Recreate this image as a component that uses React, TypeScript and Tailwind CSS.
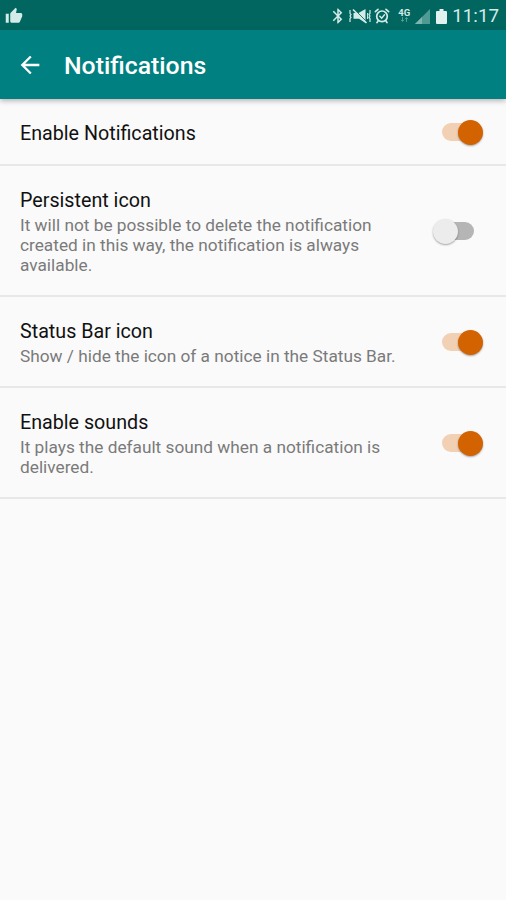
import { useState } from "react";
import { MdArrowBack, MdBluetooth, MdThumbUp } from "react-icons/md";

interface Setting {
  id: string;
  title: string;
  summary?: string;
  enabled: boolean;
  rowClass: string;
}

const SETTINGS: Setting[] = [
  { id: "all", title: "Enable Notifications", enabled: true, rowClass: "h-[67px]" },
  {
    id: "persistent",
    title: "Persistent icon",
    summary:
      "It will not be possible to delete the notification created in this way, the notification is always available.",
    enabled: false,
    rowClass: "h-[131px]",
  },
  {
    id: "statusbar",
    title: "Status Bar icon",
    summary: "Show / hide the icon of a notice in the Status Bar.",
    enabled: true,
    rowClass: "h-[91px]",
  },
  {
    id: "sounds",
    title: "Enable sounds",
    summary: "It plays the default sound when a notification is delivered.",
    enabled: true,
    rowClass: "h-[111px]",
  },
];

function MutedIcon() {
  return (
    <svg className="h-4 w-[22px]" viewBox="0 0 22 16" fill="none" stroke="currentColor">
      <path d="M1 2v3.5l1 1L1 8l1 1.5-1 1V14M21 2v3.5l-1 1L21 8l-1 1.5 1 1V14" strokeWidth="1.2" />
      <path d="M18.6 5v6" strokeWidth="1.1" />
      <path d="M4.5 5h5l7-4v14L10 10.8H4.5z" fill="currentColor" stroke="none" />
      <path d="M6 2l12 12" stroke="#00665e" strokeWidth="1" />
      <path d="M4 1.5L17.5 15" strokeWidth="1.6" />
    </svg>
  );
}

function AlarmIcon() {
  return (
    <svg className="h-4 w-4" viewBox="0 0 16 16" fill="none" stroke="currentColor" strokeLinecap="round">
      <circle cx="8" cy="8.3" r="5.3" strokeWidth="1.7" />
      <path d="M1.4 3.6L4 1.4M14.6 3.6L12 1.4M4 13l-1 1.6M12 13l1 1.6" strokeWidth="1.7" />
      <path d="M5.8 8.2l1.9 1.9 2.8-3.3" strokeWidth="1.4" />
    </svg>
  );
}

function DataArrows() {
  return (
    <svg className="h-[5px] w-[9px]" viewBox="0 0 9 5" fill="none" stroke="currentColor" opacity="0.4">
      <path d="M2.5 0v4M1 2.8l1.5 1.7L4 2.8M6.5 5V1M5 2.2L6.5.5 8 2.2" />
    </svg>
  );
}

function StatusBar() {
  return (
    <div className="flex h-[30px] items-center bg-[#00665f] pr-[7px] pl-[5px] text-[#d5ebe8]">
      <MdThumbUp className="mt-px h-[18px] w-[18px]" />
      <div className="ml-auto flex items-center pt-0.5">
        <MdBluetooth className="h-[18px] w-[18px]" />
        <span className="ml-0.5">
          <MutedIcon />
        </span>
        <span className="ml-[3px]">
          <AlarmIcon />
        </span>
        <div className="ml-[7px] flex h-4 w-[14px] flex-col items-center">
          <span className="text-[9.5px] leading-[9px] font-bold">4G</span>
          <DataArrows />
        </div>
        <svg className="ml-[4px] h-[15px] w-[15px]" viewBox="0 0 15 15">
          <path d="M15 0v15H0z" fill="#4f9a93" />
          <path d="M7 8v7H0z" fill="#7fb5b0" />
        </svg>
        <svg className="ml-[6px] h-[15px] w-[11px]" viewBox="0 0 11 15">
          <path d="M3.5 0h4v2H10q1 0 1 1v11q0 1-1 1H1q-1 0-1-1V3q0-1 1-1h2.5z" fill="#e4f2ef" />
        </svg>
        <span className="ml-[5px] text-[18.8px] leading-5">11:17</span>
      </div>
    </div>
  );
}

function Toggle({ on, onToggle, label }: { on: boolean; onToggle: () => void; label: string }) {
  return (
    <button
      role="switch"
      aria-checked={on}
      aria-label={label}
      onClick={onToggle}
      className="relative mt-px h-[25px] w-[50px] shrink-0"
    >
      <span
        className={`absolute top-[3px] left-[9px] h-[18px] w-8 rounded-full ${on ? "bg-[#f2d0b3]" : "bg-[#b5b5b5]"}`}
      />
      <span
        className={`absolute top-0 h-[25px] w-[25px] rounded-full shadow-[0_1px_2px_rgba(0,0,0,0.35)] ${
          on ? "right-0 bg-[#d36200]" : "left-0 bg-[#ececec]"
        }`}
      />
    </button>
  );
}

export default function App() {
  const [values, setValues] = useState<Record<string, boolean>>(
    Object.fromEntries(SETTINGS.map((s) => [s.id, s.enabled]))
  );

  return (
    <div className="flex h-[900px] w-[506px] flex-col overflow-hidden bg-[#fafafa] font-[Roboto,sans-serif]">
      <StatusBar />

      <header className="z-10 flex h-[69px] shrink-0 items-center bg-[#008080] pt-px pl-4 text-white shadow-[0_2px_5px_rgba(60,50,70,0.35)]">
        <MdArrowBack className="h-7 w-7" />
        <h1 className="ml-5 pt-0.5 text-[24.8px] leading-8 font-medium">Notifications</h1>
      </header>

      <main>
        {SETTINGS.map((setting) => (
          <section
            key={setting.id}
            className={`flex items-center justify-between border-b-2 border-[#e8e8e8] pr-[23px] pl-5 ${setting.rowClass}`}
          >
            <div className={`w-[380px] ${setting.summary ? "pt-px" : "pt-[3px]"}`}>
              <h2 className="text-[19.7px] leading-[25px] text-[#111111]">{setting.title}</h2>
              {setting.summary && (
                <p className="-mb-px pt-0.5 text-[17.25px] leading-5 text-[#7a7a7a]">{setting.summary}</p>
              )}
            </div>
            <Toggle
              label={setting.title}
              on={values[setting.id]}
              onToggle={() => setValues({ ...values, [setting.id]: !values[setting.id] })}
            />
          </section>
        ))}
      </main>
    </div>
  );
}
